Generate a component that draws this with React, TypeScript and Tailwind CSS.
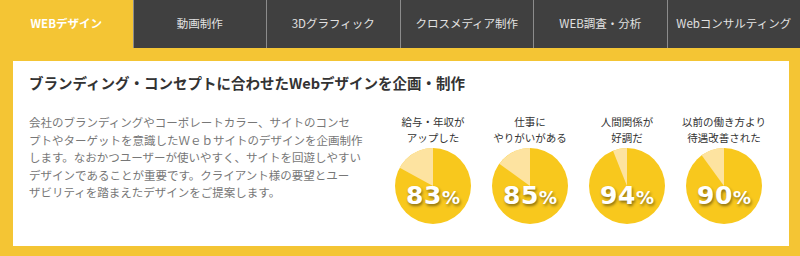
import React from 'react'

const tabs = ['WEBデザイン', '動画制作', '3Dグラフィック', 'クロスメディア制作', 'WEB調査・分析', 'Webコンサルティング']

const stats = [
  { label: ['給与・年収が', 'アップした'], value: 83 },
  { label: ['仕事に', 'やりがいがある'], value: 85 },
  { label: ['人間関係が', '好調だ'], value: 94 },
  { label: ['以前の働き方より', '待遇改善された'], value: 90 },
]

function Pie({ value }: { value: number }) {
  const r = 38
  const a = ((100 - value) * 3.6 * Math.PI) / 180
  const x = r - r * Math.sin(a)
  const y = r - r * Math.cos(a)
  return (
    <div className="relative w-[76px] h-[76px]">
      <svg width="76" height="76" viewBox="0 0 76 76" className="block">
        <circle cx="38" cy="38" r="38" fill="#f8c81d" />
        <path d={`M38 38 L38 0 A38 38 0 0 0 ${x} ${y} Z`} fill="#fde3a0" />
      </svg>
      <div
        className="absolute left-0 right-0 top-[35px] flex items-baseline justify-center text-white font-bold leading-none [text-shadow:1px_2px_3px_rgba(0,0,0,0.45)]"
        style={{ fontFamily: '"DejaVu Sans", Verdana, sans-serif' }}
      >
        <span className="text-[25px] tracking-[0.5px]">{value}</span>
        <span className="text-[18px]">%</span>
      </div>
    </div>
  )
}

export default function App() {
  return (
    <div className="w-[800px] h-[256px] bg-[#f4c534] overflow-hidden" style={{ fontFamily: '"Noto Sans CJK JP", "Noto Sans", sans-serif' }}>
      <nav className="flex h-[48px] bg-[#404040]">
        {tabs.map((t, i) => (
          <div
            key={t}
            className={
              i === 0
                ? 'flex-1 flex items-center justify-center bg-[#f4c534] text-white font-bold text-[11.5px]'
                : 'flex-1 flex items-center justify-center text-[#e2e2e2] text-[11.5px] border-l border-[#8c8c8c]'
            }
          >
            {t}
          </div>
        ))}
      </nav>

      <section className="mt-[13px] ml-[13px] mr-[11px] h-[185px] bg-white px-[16px] pt-[12px]">
        <h2 className="text-[14.5px] leading-[20px] font-bold text-[#333]">
          ブランディング・コンセプトに合わせたWebデザインを企画・制作
        </h2>

        <div className="flex mt-[21px]">
          <p className="w-[355.5px] shrink-0 text-[11.5px] leading-[17.5px] text-[#777]">
            会社のブランディングやコーポレートカラー、サイトのコンセ<br />
            プトやターゲットを意識したＷｅｂサイトのデザインを企画制作<br />
            します。なおかつユーザーが使いやすく、サイトを回遊しやすい<br />
            デザインであることが重要です。クライアント様の要望とユー<br />
            ザビリティを踏まえたデザインをご提案します。
          </p>

          <div className="flex">
            {stats.map((s) => (
              <div key={s.value} className="w-[97px] flex flex-col items-center">
                <div className="text-[10.5px] leading-[16px] text-[#333] text-center whitespace-nowrap">
                  {s.label[0]}
                  <br />
                  {s.label[1]}
                </div>
                <div className="mt-[2px]">
                  <Pie value={s.value} />
                </div>
              </div>
            ))}
          </div>
        </div>
      </section>
    </div>
  )
}
